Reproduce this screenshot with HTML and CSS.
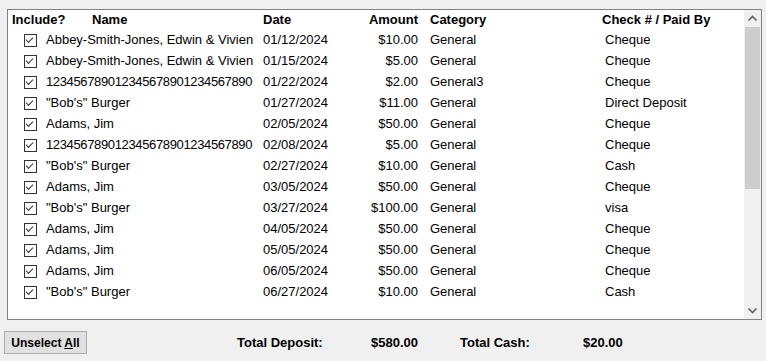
FILE: index.html
```html
<!DOCTYPE html>
<html lang="en">
<head>
    <meta charset="UTF-8">
    <title>Deposit</title>
    <link rel="stylesheet" href="styles.css">
</head>
<body>
<div class="panel">
    <div class="list">
        <div class="row head">
            <span class="h-inc">Include?</span>
            <span class="h-name">Name</span>
            <span>Date</span>
            <span class="amt">Amount</span>
            <span>Category</span>
            <span class="h-paid">Check # / Paid By</span>
        </div>
        <div class="row"><span class="inc"><i class="chk"></i></span><span>Abbey-Smith-Jones, Edwin &amp; Vivien</span><span>01/12/2024</span><span class="amt">$10.00</span><span>General</span><span class="paid">Cheque</span></div>
        <div class="row"><span class="inc"><i class="chk"></i></span><span>Abbey-Smith-Jones, Edwin &amp; Vivien</span><span>01/15/2024</span><span class="amt">$5.00</span><span>General</span><span class="paid">Cheque</span></div>
        <div class="row"><span class="inc"><i class="chk"></i></span><span class="digits">123456789012345678901234567890</span><span>01/22/2024</span><span class="amt">$2.00</span><span>General3</span><span class="paid">Cheque</span></div>
        <div class="row"><span class="inc"><i class="chk"></i></span><span>"Bob's" Burger</span><span>01/27/2024</span><span class="amt">$11.00</span><span>General</span><span class="paid">Direct Deposit</span></div>
        <div class="row"><span class="inc"><i class="chk"></i></span><span>Adams, Jim</span><span>02/05/2024</span><span class="amt">$50.00</span><span>General</span><span class="paid">Cheque</span></div>
        <div class="row"><span class="inc"><i class="chk"></i></span><span class="digits">123456789012345678901234567890</span><span>02/08/2024</span><span class="amt">$5.00</span><span>General</span><span class="paid">Cheque</span></div>
        <div class="row"><span class="inc"><i class="chk"></i></span><span>"Bob's" Burger</span><span>02/27/2024</span><span class="amt">$10.00</span><span>General</span><span class="paid">Cash</span></div>
        <div class="row"><span class="inc"><i class="chk"></i></span><span>Adams, Jim</span><span>03/05/2024</span><span class="amt">$50.00</span><span>General</span><span class="paid">Cheque</span></div>
        <div class="row"><span class="inc"><i class="chk"></i></span><span>"Bob's" Burger</span><span>03/27/2024</span><span class="amt">$100.00</span><span>General</span><span class="paid">visa</span></div>
        <div class="row"><span class="inc"><i class="chk"></i></span><span>Adams, Jim</span><span>04/05/2024</span><span class="amt">$50.00</span><span>General</span><span class="paid">Cheque</span></div>
        <div class="row"><span class="inc"><i class="chk"></i></span><span>Adams, Jim</span><span>05/05/2024</span><span class="amt">$50.00</span><span>General</span><span class="paid">Cheque</span></div>
        <div class="row"><span class="inc"><i class="chk"></i></span><span>Adams, Jim</span><span>06/05/2024</span><span class="amt">$50.00</span><span>General</span><span class="paid">Cheque</span></div>
        <div class="row"><span class="inc"><i class="chk"></i></span><span>"Bob's" Burger</span><span>06/27/2024</span><span class="amt">$10.00</span><span>General</span><span class="paid">Cash</span></div>
    </div>
    <div class="vscroll">
        <svg class="arrow" width="17" height="17" viewBox="0 0 17 17"><path d="M4.5 10.5 L8.5 6.5 L12.5 10.5" fill="none" stroke="#606060" stroke-width="1.6"/></svg>
        <div class="track"><div class="thumb"></div></div>
        <svg class="arrow" width="17" height="17" viewBox="0 0 17 17"><path d="M4.5 6.5 L8.5 10.5 L12.5 6.5" fill="none" stroke="#606060" stroke-width="1.6"/></svg>
    </div>
</div>
<div class="footer">
    <button class="btn" type="button">Unselect <u>A</u>ll</button>
    <span class="lbl dep">Total Deposit:</span>
    <span class="val">$580.00</span>
    <span class="lbl cash">Total Cash:</span>
    <span class="val">$20.00</span>
</div>
</body>
</html>
```

FILE: styles.css
```css
body {
    margin: 0;
    background: #f0f0f0;
    font-family: "Liberation Sans", Arial, sans-serif;
    font-size: 13px;
    color: #000;
}
.panel {
    margin: 9px 0 0 7px;
    width: 753px;
    height: 309px;
    border: 1px solid #828282;
    background: #fff;
    display: flex;
}
.list {
    flex: 1;
}
.row {
    display: grid;
    grid-template-columns: 38px 217px 67px 88px 184px 1fr;
    height: 21px;
    align-items: center;
    white-space: nowrap;
}
.head {
    height: 19px;
    font-weight: bold;
}
.h-inc {
    padding-left: 4px;
}
.h-name {
    padding-left: 46px;
}
.amt {
    text-align: right;
}
.row > .amt + span {
    padding-left: 12px;
}
.paid {
    padding-left: 3px;
}
.digits {
    letter-spacing: -0.36px;
}
.inc {
    padding-left: 16px;
    display: flex;
    align-items: center;
}
.chk {
    width: 11px;
    height: 11px;
    border: 1px solid #333;
    position: relative;
    top: 1px;
}
.chk::after {
    content: "";
    position: absolute;
    left: 1px;
    top: 2px;
    width: 6px;
    height: 3px;
    border-left: 1px solid #333;
    border-bottom: 1px solid #333;
    transform: rotate(-45deg);
    transform-origin: center;
}
.vscroll {
    width: 17px;
    background: #f0f0f0;
    display: flex;
    flex-direction: column;
}
.arrow {
    display: block;
}
.track {
    flex: 1;
    padding: 0 1px;
}
.thumb {
    height: 162px;
    background: #cdcdcd;
}
.footer {
    display: flex;
    align-items: center;
    margin-top: 11px;
    padding-left: 4px;
    font-weight: bold;
}
.btn {
    width: 83px;
    height: 23px;
    background: #e1e1e1;
    border: 1px solid #adadad;
    font-family: "Liberation Sans", Arial, sans-serif;
    font-size: 12px;
    font-weight: bold;
    padding: 0;
    color: #000;
}
.lbl.dep {
    margin-left: 150px;
    width: 134px;
}
.lbl.cash {
    margin-left: 42px;
    width: 123px;
}
```
